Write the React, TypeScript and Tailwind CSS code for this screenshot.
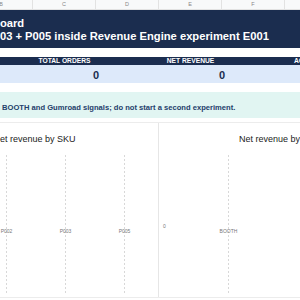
const COLS = ["B", "C", "D", "E", "F", "G"];

function DashedLine() {
  return (
    <div className="h-full w-px bg-[repeating-linear-gradient(to_bottom,#d8d8d8_0_2px,transparent_2px_4px)]" />
  );
}

function SkuColumn({ label }: { label: string }) {
  return (
    <div className="relative flex h-full w-[59px] shrink-0 justify-center">
      <DashedLine />
      <span className="absolute top-[73px] text-[5px] leading-[6px] text-[#777]">
        {label}
      </span>
    </div>
  );
}

export default function App() {
  return (
    <main className="flex h-[300px] w-[300px] flex-col overflow-hidden bg-white font-['Liberation_Sans',Arial,sans-serif]">
      {/* column letters */}
      <div className="flex h-[10px] shrink-0 border-b border-[#e2e2e2] bg-[#f8f9fa]">
        <div className="ml-[-30px] flex">
          {COLS.map((c) => (
            <div
              key={c}
              className="w-[63px] shrink-0 border-r border-[#e2e2e2] text-center text-[5.5px] leading-[9px] text-[#888]"
            >
              {c}
            </div>
          ))}
        </div>
      </div>

      {/* title band */}
      <div className="h-[38px] shrink-0 bg-[#1b2d4f] pt-[6.5px] text-[11.2px] font-bold leading-[13.5px] text-white">
        <div className="ml-[-84px] whitespace-nowrap">Revenue Dashboard</div>
        <div className="ml-[-77.5px] whitespace-nowrap">
          Run P002 + P003 + P005 inside Revenue Engine experiment E001
        </div>
      </div>

      <div className="h-[9px] shrink-0" />

      {/* KPI labels */}
      <div className="flex h-[8px] shrink-0 bg-[#1b2d4f] text-[6.7px] font-bold leading-[8px] text-white">
        <div className="ml-[-30px] flex whitespace-nowrap">
          <div className="w-[63px] shrink-0" />
          <div className="w-[63px] shrink-0 text-center">TOTAL ORDERS</div>
          <div className="w-[63px] shrink-0" />
          <div className="w-[63px] shrink-0 text-center">NET REVENUE</div>
          <div className="w-[63px] shrink-0" />
          <div className="w-[63px] shrink-0 text-center">ACTIVE SKUS</div>
        </div>
      </div>

      {/* KPI values */}
      <div className="flex h-[18px] shrink-0 bg-[#dde9fa] pt-[2px] text-[11px] font-bold leading-[16px] text-[#1b2d4f]">
        <div className="ml-[-30px] flex">
          <div className="w-[63px] shrink-0" />
          <div className="w-[126px] shrink-0 text-center">0</div>
          <div className="w-[126px] shrink-0 text-center">0</div>
        </div>
      </div>

      <div className="h-[9px] shrink-0" />

      {/* alert */}
      <div className="h-[26px] shrink-0 whitespace-nowrap bg-[#e1f5f2] pl-[2px] pt-[11.5px] text-[7.6px] font-bold leading-[8px] text-[#24406b]">
        BOOTH and Gumroad signals; do not start a second experiment.
      </div>

      <div className="h-[5px] shrink-0 border-b border-[#ececec]" />

      {/* charts */}
      <div className="flex h-[175px] shrink-0 border-b border-[#ececec]">
        <section className="flex w-[159px] shrink-0 flex-col border-r border-[#e6e6e6]">
          <h2 className="ml-[-6.5px] mt-[10px] whitespace-nowrap text-[9px] font-normal leading-[12px] text-[#222]">
            Net revenue by SKU
          </h2>
          <div className="ml-[-23px] mt-[10px] flex h-[140px]">
            <SkuColumn label="P002" />
            <SkuColumn label="P003" />
            <SkuColumn label="P005" />
          </div>
        </section>

        <section className="flex flex-1 flex-col">
          <h2 className="ml-[80px] mt-[10px] whitespace-nowrap text-[9px] font-normal leading-[12px] text-[#222]">
            Net revenue by channel
          </h2>
          <div className="mt-[10px] flex h-[140px]">
            <div className="w-[10px] shrink-0 pl-[4px] pt-[68px] text-[5px] leading-[6px] text-[#777]">
              0
            </div>
            <div className="ml-[30px]">
              <SkuColumn label="BOOTH" />
            </div>
          </div>
        </section>
      </div>
    </main>
  );
}
